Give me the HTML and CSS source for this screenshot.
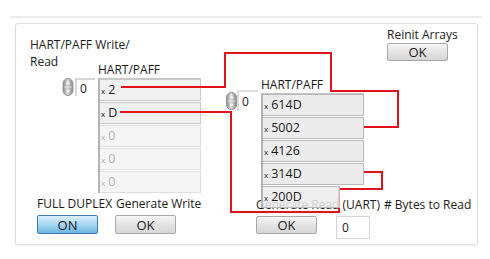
FILE: index.html
```html
<!DOCTYPE html>
<html lang="en">

<head>
    <meta charset="UTF-8">
    <title>HART/PAFF Write/Read</title>
    <link rel="stylesheet" href="styles.css">
</head>

<body>
    <div class="linha-topo"></div>

    <div class="painel">
        <div class="coluna-esq">
            <div class="titulo">HART/PAFF Write/<br>Read</div>

            <div class="grupo-array">
                <div class="indice indice-esq">
                    <svg class="spin" viewBox="0 0 12 20" width="12" height="18">
                        <defs>
                            <linearGradient id="g1" x1="0" y1="0" x2="1" y2="0">
                                <stop offset="0" stop-color="#8d8d8d" />
                                <stop offset="0.45" stop-color="#d9d9d9" />
                                <stop offset="1" stop-color="#8a8a8a" />
                            </linearGradient>
                        </defs>
                        <rect x="0.5" y="0.5" width="11" height="19" rx="5.5" fill="url(#g1)" stroke="#8c8c8c" />
                        <polygon points="6,3 8.5,7 3.5,7" fill="#f4f4f4" />
                        <polygon points="6,17 8.5,13 3.5,13" fill="#f4f4f4" />
                        <line x1="2" y1="10" x2="10" y2="10" stroke="#f0f0f0" />
                    </svg>
                    <div class="caixa-indice">0</div>
                </div>
                <div class="array-col">
                    <div class="rotulo">HART/PAFF</div>
                    <div class="array array-esq">
                        <div class="celula"><span class="radix">x</span>2</div>
                        <div class="celula"><span class="radix">x</span>D</div>
                        <div class="celula vazia"><span class="radix">x</span>0</div>
                        <div class="celula vazia"><span class="radix">x</span>0</div>
                        <div class="celula vazia"><span class="radix">x</span>0</div>
                    </div>
                </div>
            </div>

            <div class="rodape-esq">
                <div class="rotulos">
                    <span class="rot-duplex">FULL DUPLEX</span>
                    <span>Generate Write</span>
                </div>
                <div class="botoes">
                    <button class="botao botao-on">ON</button>
                    <button class="botao">OK</button>
                </div>
            </div>
        </div>

        <div class="coluna-dir">
            <div class="topo-dir">
                <div class="grupo-array grupo-dir">
                    <div class="indice indice-dir">
                        <svg class="spin" viewBox="0 0 12 20" width="11" height="22">
                            <defs>
                                <linearGradient id="g2" x1="0" y1="0" x2="1" y2="0">
                                    <stop offset="0" stop-color="#8d8d8d" />
                                    <stop offset="0.45" stop-color="#d9d9d9" />
                                    <stop offset="1" stop-color="#8a8a8a" />
                                </linearGradient>
                            </defs>
                            <rect x="0.5" y="0.5" width="11" height="19" rx="5.5" fill="url(#g2)" stroke="#8c8c8c" />
                            <polygon points="6,3 8.5,7 3.5,7" fill="#f4f4f4" />
                            <polygon points="6,17 8.5,13 3.5,13" fill="#f4f4f4" />
                            <line x1="2" y1="10" x2="10" y2="10" stroke="#f0f0f0" />
                        </svg>
                        <div class="caixa-indice caixa-dir">0</div>
                    </div>
                    <div class="array-col">
                        <div class="rotulo">HART/PAFF</div>
                        <div class="array array-dir">
                            <div class="celula"><span class="radix">x</span>614D</div>
                            <div class="celula"><span class="radix">x</span>5002</div>
                            <div class="celula"><span class="radix">x</span>4126</div>
                            <div class="celula"><span class="radix">x</span>314D</div>
                            <div class="celula ultima"><span class="radix">x</span>200D</div>
                        </div>
                    </div>
                </div>

                <div class="reinit">
                    <div class="rotulo-reinit">Reinit Arrays</div>
                    <button class="botao">OK</button>
                </div>
            </div>

            <div class="rodape-dir">
                <div class="rotulos">
                    <span>Generate Read (UART)</span>
                    <span># Bytes to Read</span>
                </div>
                <div class="botoes">
                    <button class="botao botao-read">OK</button>
                    <div class="caixa-bytes">0</div>
                </div>
            </div>
        </div>
    </div>

    <!-- fios desenhados por cima do painel -->
    <svg class="fios" width="490" height="259" viewBox="0 0 490 259">
        <polyline points="121,87 225,87 225,53 331,53 331,91 398,91 398,127 313,127" />
        <polygon points="305,127 315,122.5 315,131.5" />
        <polyline points="120,112 231,112 231,212 339,212 339,189 382,189 382,172 315,172" />
        <polygon points="307,172 317,167.5 317,176.5" />
    </svg>
</body>

</html>
```

FILE: styles.css
```css
body {
    margin: 0;
    background-color: #ffffff;
    font-family: "Open Sans", "Noto Sans", sans-serif;
    font-size: 12px;
    color: #1a1a1a;
    position: relative;
    width: 490px;
    height: 259px;
    overflow: hidden;
}

.linha-topo {
    margin: 16px 8px 0 10px;
    height: 2px;
    background-color: #ececec;
}

.painel {
    margin: 5px 0 0 15px;
    width: 461px;
    height: 220px;
    border: 1px solid #dcdcdc;
    border-radius: 3px;
    box-shadow: 0 1px 2px #eeeeee;
    display: flex;
}

.coluna-esq {
    width: 210px;
    padding-left: 14px;
    box-sizing: border-box;
    display: flex;
    flex-direction: column;
}

.titulo {
    margin-top: 12px;
    height: 27px;
    line-height: 17px;
}

.grupo-array {
    display: flex;
    margin-left: 32px;
}

.indice {
    display: flex;
    gap: 1px;
    position: relative;
    z-index: 3;
}

.indice-esq {
    margin-top: 15px;
}

.caixa-indice {
    width: 15px;
    height: 16px;
    padding-left: 3px;
    border-top: 2px solid #d6d6d6;
    border-left: 2px solid #d6d6d6;
    line-height: 17px;
    background-color: #ffffff;
}

.array-col {
    margin-left: 3px;
}

.rotulo {
    height: 15px;
    line-height: 14px;
}

.array {
    display: flex;
    flex-direction: column;
    gap: 1px;
    border-left: 2px solid #b4b4b4;
    border-top: 1px solid #c4c4c4;
}

.array-esq {
    width: 101px;
}

.celula {
    height: 20px;
    line-height: 19px;
    padding-left: 1px;
    background-color: #f0f0f0;
    border: 1px solid #c8c8c8;
    border-left: none;
    font-size: 12.5px;
}

.vazia {
    color: #b0b0b0;
    background-color: #f5f5f5;
    border-color: #dedede;
}

.radix {
    font-size: 8px;
    margin-right: 3px;
}

.rodape-esq {
    margin-top: 2px;
    margin-left: 7px;
}

.rotulos {
    display: flex;
    gap: 4px;
    line-height: 17px;
    white-space: nowrap;
}

.rot-duplex {
    width: 75px;
}

.botoes {
    display: flex;
    gap: 17px;
    margin-top: 3px;
    align-items: flex-start;
}

.botao {
    width: 61px;
    height: 19px;
    padding: 0;
    font-family: inherit;
    font-size: 13px;
    line-height: 16px;
    color: #1a1a1a;
    border: 1px solid #a8a8a8;
    border-radius: 2px;
    background: linear-gradient(#f6f6f6, #e4e4e4 50%, #d6d6d6);
}

.botao-on {
    border-color: #3d7db0;
    background: linear-gradient(#d9effb, #a9d7f2 50%, #6ab4e0);
}

.coluna-dir {
    display: flex;
    flex-direction: column;
    flex: 1;
}

.topo-dir {
    display: flex;
    align-items: flex-start;
}

.grupo-dir {
    margin-left: 0;
    margin-top: 54px;
    position: relative;
    z-index: 2;
}

.indice-dir {
    margin-top: 12px;
    gap: 0;
}

.caixa-dir {
    width: 16px;
    height: 19px;
    line-height: 19px;
    padding-left: 3px;
    border-color: #dedede;
}

.array-dir {
    width: 101px;
}

.array-dir .celula {
    background-color: #ececec;
    border-color: #b8b8b8;
}

.array-dir .ultima {
    width: 75px;
    background-color: rgba(236, 236, 236, 0.85);
}

.reinit {
    margin-left: 23px;
    margin-top: 2px;
}

.rotulo-reinit {
    line-height: 17px;
}

.reinit .botao {
    height: 18px;
}

.rodape-dir {
    margin-top: -12px;
    margin-left: 30px;
}

.rodape-dir .rotulos {
    gap: 4px;
}

.rodape-dir .botoes {
    gap: 19px;
}

.botao-read {
    height: 18px;
}

.caixa-bytes {
    width: 27px;
    height: 21px;
    line-height: 21px;
    padding-left: 5px;
    border: 1px solid #d4d4d4;
    background-color: #ffffff;
}

.fios {
    position: absolute;
    top: 0;
    left: 0;
    z-index: 1;
    pointer-events: none;
}

.fios polyline {
    fill: none;
    stroke: #e1121b;
    stroke-width: 2;
}

.fios polygon {
    fill: #e1121b;
}
```
